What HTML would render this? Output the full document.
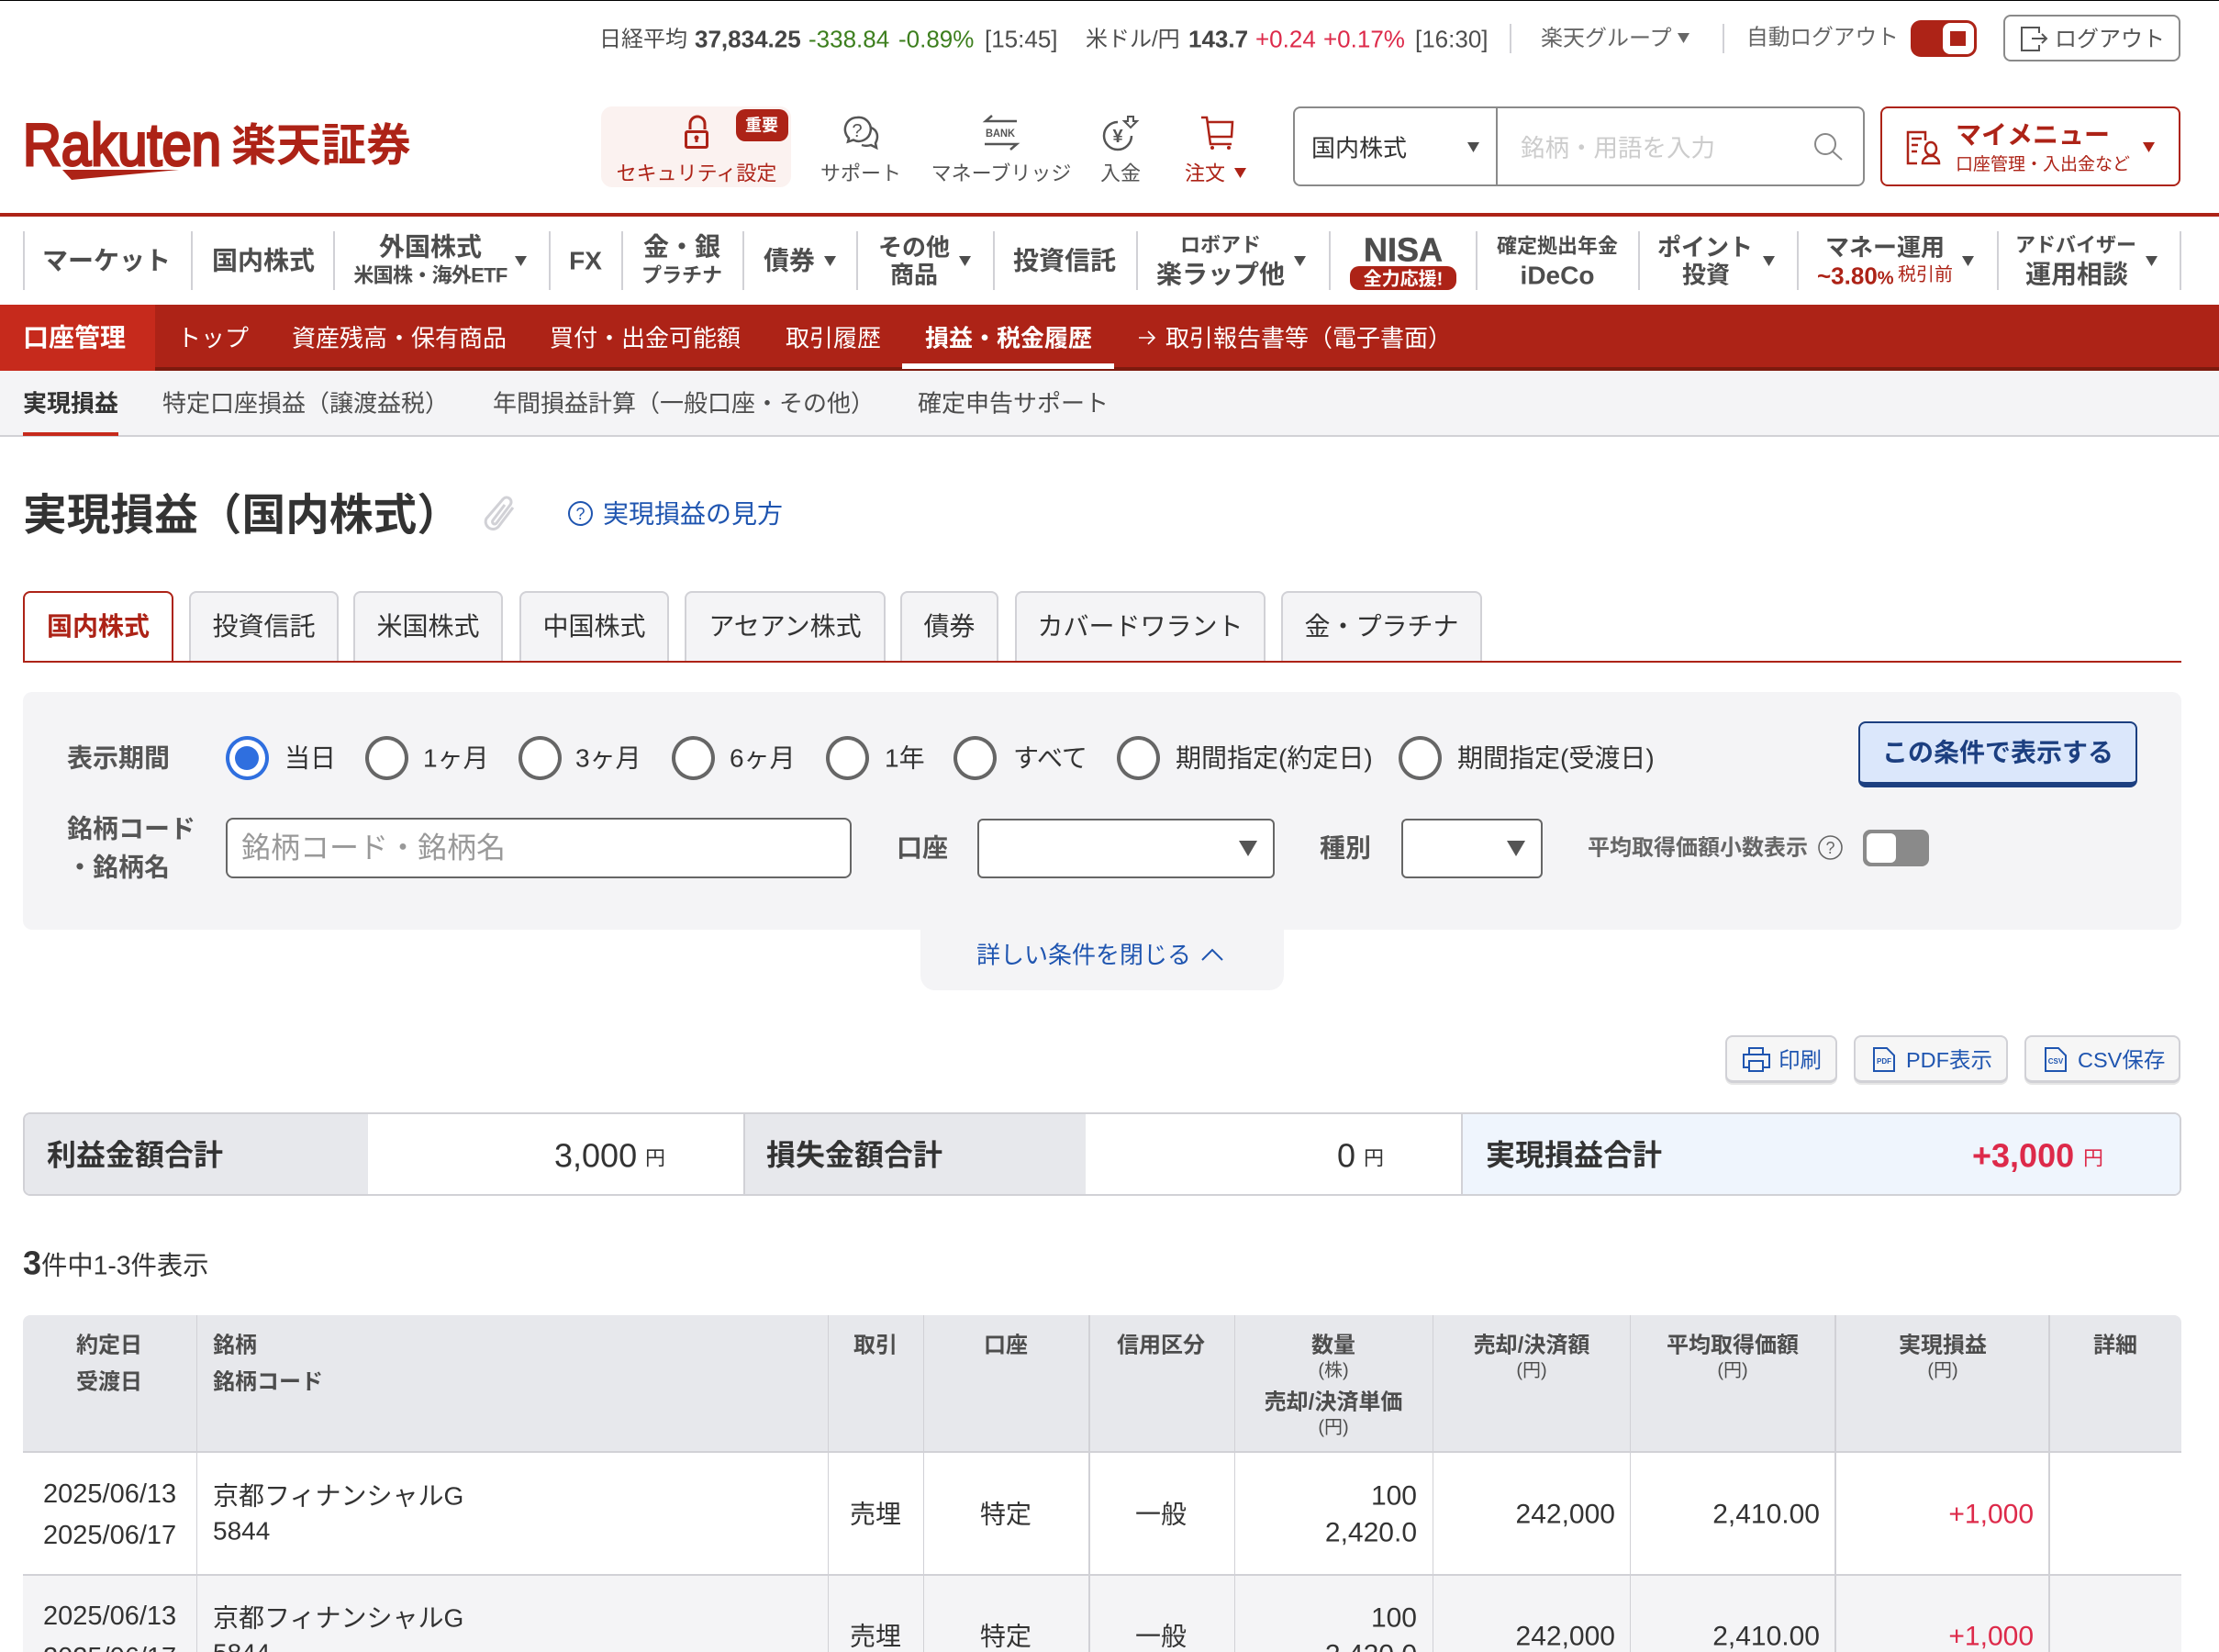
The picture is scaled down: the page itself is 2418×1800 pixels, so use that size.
<!DOCTYPE html>
<html lang="ja"><head><meta charset="utf-8"><title>実現損益（国内株式）</title>
<style>
html,body{margin:0;padding:0;background:#fff}
#p{position:relative;width:2418px;height:1800px;overflow:hidden;background:#fff;font-family:"Liberation Sans","Noto Sans CJK JP",sans-serif;color:#333}
.a{position:absolute;white-space:nowrap;line-height:1;transform:translateY(calc(-50% + 1.5px))}
.c{transform:translate(-50%,calc(-50% + 1.5px))}
.r{transform:translate(-100%,calc(-50% + 1.5px))}
.b{font-weight:700}
.g{color:#4d4d4d}
.w{color:#fff}
.red{color:#ad2317}
.blue{color:#1f55b0}
.box{position:absolute;box-sizing:border-box}
.sep{position:absolute;top:252px;width:2px;height:64px;background:#d1d1d6}
.v{position:absolute;width:13px;height:11px;background:#4d4d4d;clip-path:polygon(0 0,100% 0,50% 100%)}
.tab{position:absolute;top:644px;height:76px;box-sizing:border-box;background:#f4f4f6;border:2px solid #d1d1d6;border-bottom:0;border-radius:8px 8px 0 0;font-size:28px;text-align:center;line-height:74px;white-space:nowrap}
.ra{position:absolute;top:802px;width:47px;height:48px;box-sizing:border-box;border:4px solid #666;border-radius:50%;background:#fff}
.f26{font-size:26px}.f28{font-size:28px}.f24{font-size:24px}.f22{font-size:22px}.f20{font-size:20px}.f30{font-size:30px}
.col{position:absolute;top:1433px;height:367px;background:#d1d1d6;width:1px}
.col2{width:2px}
</style></head><body><div id="p">
<div class="box" style="left:0;top:0;width:2418px;height:1px;background:#000"></div>

<!-- top bar -->
<span class="a f24 g" style="left:653px;top:42px">日経平均</span>
<span class="a b" style="left:757px;top:40.5px;font-size:26px;color:#444">37,834.25</span>
<span class="a" style="left:881px;top:40.5px;font-size:26px;color:#3d7f1e">-338.84</span>
<span class="a" style="left:979px;top:40.5px;font-size:26px;color:#3d7f1e">-0.89%</span>
<span class="a g" style="left:1073px;top:40.5px;font-size:26px">[15:45]</span>
<span class="a f24 g" style="left:1183px;top:42px">米ドル/円</span>
<span class="a b" style="left:1295px;top:40.5px;font-size:26px;color:#444">143.7</span>
<span class="a" style="left:1368px;top:40.5px;font-size:26px;color:#dd2a4a">+0.24</span>
<span class="a" style="left:1442px;top:40.5px;font-size:26px;color:#dd2a4a">+0.17%</span>
<span class="a g" style="left:1542px;top:40.5px;font-size:26px">[16:30]</span>
<div class="box" style="left:1645px;top:26px;width:2px;height:32px;background:#d1d1d6"></div>
<span class="a f24" style="left:1679px;top:41px;color:#666">楽天グループ</span>
<i class="v" style="left:1828px;top:36px;background:#666"></i>
<div class="box" style="left:1877px;top:26px;width:2px;height:32px;background:#d1d1d6"></div>
<span class="a" style="left:1903px;top:41px;color:#666;font-size:23.7px">自動ログアウト</span>
<div class="box" style="left:2082px;top:22px;width:72px;height:40px;border-radius:11px;background:#ad2317"></div>
<div class="box" style="left:2117px;top:25px;width:34px;height:34px;border-radius:8px;background:#fff"></div>
<div class="box" style="left:2125px;top:34px;width:17px;height:16px;background:#ad2317"></div>
<div class="box" style="left:2183px;top:16px;width:193px;height:51px;border:2px solid #8a8a8a;border-radius:8px"></div>
<span class="a f24" style="left:2239px;top:42px;color:#555">ログアウト</span>

<!-- logo -->
<svg style="position:absolute;left:0;top:0" width="500" height="232">
<text x="25" y="180" font-family="Liberation Sans" font-size="65" fill="#ad2317" stroke="#ad2317" stroke-width="3" textLength="216" lengthAdjust="spacingAndGlyphs">Rakuten</text>
<polygon points="68,185 195,185 78,196" fill="#ad2317"/>
</svg>
<span class="a b red" style="left:252px;top:158px;font-size:49px">楽天証券</span>

<!-- utility icons -->
<div class="box" style="left:655px;top:116px;width:207px;height:88px;background:#fbf2f0;border-radius:12px"></div>
<div class="box" style="left:802px;top:119px;width:57px;height:35px;background:#ad2317;border-radius:10px"></div>
<span class="a c b w" style="left:830px;top:135px;font-size:18px">重要</span>
<span class="a c f22 red" style="left:759px;top:188px">セキュリティ設定</span>
<span class="a c f22" style="left:938px;top:188px;color:#555">サポート</span>
<span class="a c f22" style="left:1091px;top:188px;color:#555">マネーブリッジ</span>
<span class="a c f22" style="left:1221px;top:188px;color:#555">入金</span>
<span class="a f22 red" style="left:1291px;top:188px">注文</span>
<i class="v" style="left:1345px;top:183px;background:#ad2317"></i>

<!-- search -->
<div class="box" style="left:1409px;top:116px;width:623px;height:87px;border:2px solid #8a8a8a;border-radius:8px"></div>
<div class="box" style="left:1630px;top:116px;width:2px;height:87px;background:#8a8a8a"></div>
<span class="a f26" style="left:1429px;top:160px">国内株式</span>
<i class="v" style="left:1599px;top:155px"></i>
<span class="a" style="left:1657px;top:160px;color:#ccc;font-size:26.5px">銘柄・用語を入力</span>
<div class="box" style="left:2049px;top:116px;width:327px;height:87px;border:2px solid #ad2317;border-radius:8px"></div>
<span class="a b red f28" style="left:2131px;top:146px">マイメニュー</span>
<span class="a red" style="left:2131px;top:178px;font-size:19px">口座管理・入出金など</span>
<i class="v" style="left:2335px;top:155px;background:#ad2317"></i>

<!-- main nav -->
<div class="box" style="left:0;top:232px;width:2418px;height:4px;background:#ad2317"></div>
<i class="sep" style="left:25px"></i><i class="sep" style="left:208px"></i><i class="sep" style="left:363px"></i><i class="sep" style="left:598px"></i><i class="sep" style="left:677px"></i><i class="sep" style="left:809px"></i><i class="sep" style="left:933px"></i><i class="sep" style="left:1082px"></i><i class="sep" style="left:1238px"></i><i class="sep" style="left:1448px"></i><i class="sep" style="left:1608px"></i><i class="sep" style="left:1785px"></i><i class="sep" style="left:1958px"></i><i class="sep" style="left:2176px"></i><i class="sep" style="left:2375px"></i>
<span class="a c b g f28" style="left:116px;top:283px">マーケット</span>
<span class="a c b g f28" style="left:287px;top:283px">国内株式</span>
<span class="a c b g f28" style="left:469px;top:268px">外国株式</span>
<span class="a c b g f22" style="left:469px;top:299px;letter-spacing:-.7px">米国株・海外ETF</span>
<i class="v" style="left:561px;top:279px"></i>
<span class="a c b g f28" style="left:638px;top:283px">FX</span>
<span class="a c b g f28" style="left:743px;top:268px">金・銀</span>
<span class="a c b g f22" style="left:743px;top:299px">プラチナ</span>
<span class="a c b g f28" style="left:860px;top:283px">債券</span>
<i class="v" style="left:898px;top:279px"></i>
<span class="a c b g f26" style="left:996px;top:268px">その他</span>
<span class="a c b g f26" style="left:996px;top:298px">商品</span>
<i class="v" style="left:1045px;top:279px"></i>
<span class="a c b g f28" style="left:1160px;top:283px">投資信託</span>
<span class="a c b g f22" style="left:1330px;top:266px">ロボアド</span>
<span class="a c b g f28" style="left:1330px;top:298px">楽ラップ他</span>
<i class="v" style="left:1410px;top:279px"></i>
<span class="a c b g" style="left:1529px;top:270.5px;font-size:36px;-webkit-text-stroke:.5px #4d4d4d">NISA</span>
<div class="box" style="left:1471px;top:290px;width:116px;height:26px;border-radius:10px;background:#ad2317"></div>
<span class="a c b w f20" style="left:1529px;top:303px">全力応援!</span>
<span class="a c b g f22" style="left:1697px;top:267px">確定拠出年金</span>
<span class="a c b g f28" style="left:1697px;top:299px">iDeCo</span>
<span class="a c b g f26" style="left:1858px;top:268px">ポイント</span>
<span class="a c b g f26" style="left:1859px;top:298px">投資</span>
<i class="v" style="left:1921px;top:279px"></i>
<span class="a c b g f26" style="left:2054px;top:268px">マネー運用</span>
<span class="a b red" style="left:1980px;top:298.5px;font-size:26px">~3.80<span style="font-size:20px">%</span></span>
<span class="a f20 red" style="left:2068px;top:298px">税引前</span>
<i class="v" style="left:2138px;top:279px"></i>
<span class="a c b g f22" style="left:2262px;top:266px">アドバイザー</span>
<span class="a c b g f28" style="left:2263px;top:298px">運用相談</span>
<i class="v" style="left:2338px;top:279px"></i>

<!-- red nav -->
<div class="box" style="left:0;top:332px;width:2418px;height:72px;background:#ad2317;border-bottom:4px solid #7d1a0e"></div>
<div class="box" style="left:0;top:332px;width:169px;height:72px;background:#c62a1c"></div>
<span class="a b w f28" style="left:25px;top:367px">口座管理</span>
<span class="a f26 w" style="left:193px;top:367px">トップ</span>
<span class="a f26 w" style="left:318px;top:367px">資産残高・保有商品</span>
<span class="a f26 w" style="left:599px;top:367px">買付・出金可能額</span>
<span class="a f26 w" style="left:856px;top:367px">取引履歴</span>
<span class="a b f26 w" style="left:1008px;top:367px">損益・税金履歴</span>
<div class="box" style="left:983px;top:396px;width:231px;height:6px;background:#fff"></div>
<span class="a f26 w" style="left:1270px;top:367px">取引報告書等（電子書面）</span>

<!-- sub nav -->
<div class="box" style="left:0;top:404px;width:2418px;height:72px;background:#f4f4f6;border-bottom:2px solid #d1d1d6"></div>
<div class="box" style="left:25px;top:471px;width:104px;height:4px;background:#c62a1c"></div>
<span class="a b f26" style="left:25px;top:438px">実現損益</span>
<span class="a f26 g" style="left:177px;top:438px">特定口座損益（譲渡益税）</span>
<span class="a f26 g" style="left:537px;top:438px">年間損益計算（一般口座・その他）</span>
<span class="a f26 g" style="left:1000px;top:438px">確定申告サポート</span>

<!-- title -->
<span class="a b" style="left:25px;top:560.5px;font-size:47.7px">実現損益（国内株式）</span>
<span class="a f28 blue" style="left:657px;top:559px">実現損益の見方</span>

<!-- tabs -->
<div class="tab b red" style="left:25px;width:164px;border-color:#ad2317;background:#fff">国内株式</div>
<div class="tab" style="left:206px;width:163px">投資信託</div>
<div class="tab" style="left:385px;width:163px">米国株式</div>
<div class="tab" style="left:566px;width:163px">中国株式</div>
<div class="tab" style="left:746px;width:219px">アセアン株式</div>
<div class="tab" style="left:981px;width:107px">債券</div>
<div class="tab" style="left:1106px;width:273px">カバードワラント</div>
<div class="tab" style="left:1396px;width:219px">金・プラチナ</div>
<div class="box" style="left:25px;top:720px;width:2352px;height:2px;background:#ad2317"></div>

<!-- search panel -->
<div class="box" style="left:25px;top:754px;width:2352px;height:259px;background:#f4f4f6;border-radius:10px"></div>
<div class="box" style="left:1003px;top:1013px;width:396px;height:66px;background:#f4f4f6;border-radius:0 0 16px 16px"></div>
<span class="a b f28" style="left:73px;top:825px;color:#555">表示期間</span>
<i class="ra" style="left:246px;border-color:#2f6fdf"></i>
<div class="box" style="left:256px;top:813px;width:26px;height:26px;border-radius:50%;background:#2f6fdf"></div>
<span class="a f28" style="left:310px;top:825px">当日</span>
<i class="ra" style="left:398px"></i><span class="a f28" style="left:461px;top:825px">1ヶ月</span>
<i class="ra" style="left:565px"></i><span class="a f28" style="left:627px;top:825px">3ヶ月</span>
<i class="ra" style="left:732px"></i><span class="a f28" style="left:795px;top:825px">6ヶ月</span>
<i class="ra" style="left:900px"></i><span class="a f28" style="left:964px;top:825px">1年</span>
<i class="ra" style="left:1039px"></i><span class="a f28" style="left:1104px;top:825px">すべて</span>
<i class="ra" style="left:1217px"></i><span class="a f28" style="left:1281px;top:825px">期間指定(約定日)</span>
<i class="ra" style="left:1524px"></i><span class="a f28" style="left:1588px;top:825px">期間指定(受渡日)</span>
<div class="box" style="left:2025px;top:786px;width:304px;height:72px;background:#dbe7fb;border:2px solid #1c3f80;border-bottom-width:6px;border-radius:8px"></div>
<span class="a c b f28" style="left:2177px;top:818.5px;color:#1c3f80">この条件で表示する</span>

<span class="a b f28" style="left:73px;top:902px;color:#555">銘柄コード</span>
<span class="a b f28" style="left:73px;top:944px;color:#555">・銘柄名</span>
<div class="box" style="left:246px;top:891px;width:682px;height:66px;background:#fff;border:2px solid #666;border-radius:8px"></div>
<span class="a" style="left:263px;top:921.5px;font-size:32px;color:#999">銘柄コード・銘柄名</span>
<span class="a b f28" style="left:977px;top:923px;color:#555">口座</span>
<div class="box" style="left:1065px;top:892px;width:324px;height:65px;background:#fff;border:2px solid #666;border-radius:6px"></div>
<i class="v" style="left:1350px;top:916px;width:20px;height:17px;background:#555"></i>
<span class="a b f28" style="left:1438px;top:923px;color:#555">種別</span>
<div class="box" style="left:1527px;top:892px;width:154px;height:65px;background:#fff;border:2px solid #666;border-radius:6px"></div>
<i class="v" style="left:1642px;top:916px;width:20px;height:17px;background:#555"></i>
<span class="a b f24" style="left:1730px;top:923px;color:#666">平均取得価額小数表示</span>
<div class="box" style="left:2030px;top:904px;width:72px;height:40px;border-radius:8px;background:#8a8a8a"></div>
<div class="box" style="left:2034px;top:908px;width:32px;height:32px;border-radius:6px;background:#fff"></div>
<span class="a f26 blue" style="left:1064px;top:1038.5px">詳しい条件を閉じる</span>

<!-- action buttons -->
<div class="box" style="left:1880px;top:1128px;width:122px;height:52px;background:#f6f6f6;border:2px solid #d1d1d6;border-bottom-width:3px;border-radius:8px;box-shadow:0 2px 0 #e6e6e6"></div>
<div class="box" style="left:2020px;top:1128px;width:168px;height:52px;background:#f6f6f6;border:2px solid #d1d1d6;border-bottom-width:3px;border-radius:8px;box-shadow:0 2px 0 #e6e6e6"></div>
<div class="box" style="left:2206px;top:1128px;width:170px;height:52px;background:#f6f6f6;border:2px solid #d1d1d6;border-bottom-width:3px;border-radius:8px;box-shadow:0 2px 0 #e6e6e6"></div>
<span class="a blue" style="left:1938px;top:1154px;font-size:23.5px">印刷</span>
<span class="a blue" style="left:2077px;top:1154px;font-size:23.5px">PDF表示</span>
<span class="a blue" style="left:2264px;top:1154px;font-size:23.5px">CSV保存</span>

<!-- summary -->
<div class="box" style="left:25px;top:1212px;width:2352px;height:91px;border:2px solid #d1d1d6;border-radius:8px;background:#fff;overflow:hidden">
<div class="box" style="left:0;top:0;width:374px;height:87px;background:#e7e8ec"></div>
<div class="box" style="left:783px;top:0;width:2px;height:87px;background:#d1d1d6"></div>
<div class="box" style="left:785px;top:0;width:371px;height:87px;background:#e7e8ec"></div>
<div class="box" style="left:1565px;top:0;width:2px;height:87px;background:#d1d1d6"></div>
<div class="box" style="left:1567px;top:0;width:785px;height:87px;background:#eff5fd"></div>
</div>
<span class="a b" style="left:51px;top:1256.5px;font-size:32px">利益金額合計</span>
<span class="a" style="left:604px;top:1257.5px;font-size:36px">3,000</span>
<span class="a f22" style="left:703px;top:1260.5px">円</span>
<span class="a b" style="left:835px;top:1256.5px;font-size:32px">損失金額合計</span>
<span class="a" style="left:1457px;top:1257.5px;font-size:36px">0</span>
<span class="a f22" style="left:1486px;top:1260.5px">円</span>
<span class="a b" style="left:1619px;top:1256.5px;font-size:32px">実現損益合計</span>
<span class="a b" style="left:2149px;top:1257.5px;font-size:36px;color:#dd2a4a">+3,000</span>
<span class="a f22" style="left:2270px;top:1260.5px;color:#dd2a4a">円</span>

<span class="a" style="left:25px;top:1375px;font-size:28.3px"><b style="font-size:36px">3</b>件中1-3件表示</span>

<!-- table -->
<div class="box" style="left:25px;top:1433px;width:2352px;height:148px;background:#e7e8ec;border-radius:8px 8px 0 0"></div>
<div class="box" style="left:25px;top:1581px;width:2352px;height:2px;background:#d1d1d6"></div>
<div class="box" style="left:25px;top:1715px;width:2352px;height:2px;background:#d1d1d6"></div>
<div class="box" style="left:25px;top:1717px;width:2352px;height:83px;background:#f4f4f6"></div>
<i class="col" style="left:214px"></i><i class="col" style="left:902px"></i><i class="col" style="left:1006px"></i><i class="col col2" style="left:1186px"></i><i class="col" style="left:1345px"></i><i class="col" style="left:1561px"></i><i class="col" style="left:1776px"></i><i class="col col2" style="left:1999px"></i><i class="col col2" style="left:2232px"></i>

<span class="a c b f24 g" style="left:119px;top:1465px">約定日</span>
<span class="a c b f24 g" style="left:119px;top:1505px">受渡日</span>
<span class="a b f24 g" style="left:232px;top:1465px">銘柄</span>
<span class="a b f24 g" style="left:232px;top:1505px">銘柄コード</span>
<span class="a c b f24 g" style="left:954px;top:1465px">取引</span>
<span class="a c b f24 g" style="left:1096px;top:1465px">口座</span>
<span class="a c b f24 g" style="left:1265px;top:1465px">信用区分</span>
<span class="a c b f24 g" style="left:1453px;top:1465px">数量</span>
<span class="a c f20 g" style="left:1453px;top:1491.5px">(株)</span>
<span class="a c b f24 g" style="left:1453px;top:1527px">売却/決済単価</span>
<span class="a c f20 g" style="left:1453px;top:1553.5px">(円)</span>
<span class="a c b f24 g" style="left:1669px;top:1465px">売却/決済額</span>
<span class="a c f20 g" style="left:1669px;top:1491.5px">(円)</span>
<span class="a c b f24 g" style="left:1888px;top:1465px">平均取得価額</span>
<span class="a c f20 g" style="left:1888px;top:1491.5px">(円)</span>
<span class="a c b f24 g" style="left:2117px;top:1465px">実現損益</span>
<span class="a c f20 g" style="left:2117px;top:1491.5px">(円)</span>
<span class="a c b f24 g" style="left:2305px;top:1465px">詳細</span>

<span class="a" style="left:47px;top:1627px;font-size:29px">2025/06/13</span>
<span class="a" style="left:47px;top:1672px;font-size:29px">2025/06/17</span>
<span class="a f28" style="left:232px;top:1629px">京都フィナンシャルG</span>
<span class="a" style="left:232px;top:1667px;font-size:28px">5844</span>
<span class="a c f28" style="left:954px;top:1649px">売埋</span>
<span class="a c f28" style="left:1096px;top:1649px">特定</span>
<span class="a c f28" style="left:1265px;top:1649px">一般</span>
<span class="a r f30" style="left:1544px;top:1629px">100</span>
<span class="a r f30" style="left:1544px;top:1669px">2,420.0</span>
<span class="a r f30" style="left:1760px;top:1649px">242,000</span>
<span class="a r f30" style="left:1983px;top:1649px">2,410.00</span>
<span class="a r f30" style="left:2216px;top:1649px;color:#dd2a4a">+1,000</span>

<span class="a" style="left:47px;top:1760px;font-size:29px">2025/06/13</span>
<span class="a" style="left:47px;top:1805px;font-size:29px">2025/06/17</span>
<span class="a f28" style="left:232px;top:1762px">京都フィナンシャルG</span>
<span class="a" style="left:232px;top:1800px;font-size:28px">5844</span>
<span class="a c f28" style="left:954px;top:1782px">売埋</span>
<span class="a c f28" style="left:1096px;top:1782px">特定</span>
<span class="a c f28" style="left:1265px;top:1782px">一般</span>
<span class="a r f30" style="left:1544px;top:1762px">100</span>
<span class="a r f30" style="left:1544px;top:1802px">2,420.0</span>
<span class="a r f30" style="left:1760px;top:1782px">242,000</span>
<span class="a r f30" style="left:1983px;top:1782px">2,410.00</span>
<span class="a r f30" style="left:2216px;top:1782px;color:#dd2a4a">+1,000</span>

<!-- icon overlay -->
<svg style="position:absolute;left:0;top:0" width="2418" height="1800" fill="none">
<!-- red nav arrow -->
<path d="M1241 368h17M1251 361l7 7-7 7" stroke="#fff" stroke-width="1.6"/>
<!-- lock -->
<g stroke="#ad2317" stroke-width="3"><path d="M752 141v-6a8 8 0 0 1 16 0v6"/><rect x="747.5" y="143.5" width="23" height="17" rx="1.5"/><path d="M759 150v5"/></g>
<circle cx="759" cy="150" r="2.5" fill="#ad2317"/>
<!-- support -->
<g stroke="#555" stroke-width="2.5"><path d="M934 128a13 13 0 0 0-9 22.5l-1 4 6-2a13 13 0 1 0 4-24.5z"/><path d="M949 139c5 2 7 6 7 10 0 3-1 5-2 7l1 5-6-3c-3 1-7 1-10 0"/></g>
<text x="934" y="149" font-family="Liberation Sans" font-size="20" fill="#555" text-anchor="middle">?</text>
<!-- bank -->
<g stroke="#555" stroke-width="2.5"><path d="M1108 132H1074l7-6"/><path d="M1073 157h35l-7 6"/></g>
<text x="1074" y="149" font-family="Liberation Sans" font-weight="700" font-size="12" fill="#555" textLength="32" lengthAdjust="spacingAndGlyphs">BANK</text>
<!-- nyukin -->
<path d="M1233 148a15 15 0 1 1-15-15" stroke="#555" stroke-width="2.5"/>
<path d="M1229 127h6v5h4l-7 7-7-7h4z" stroke="#555" stroke-width="2"/>
<text x="1218" y="155" font-family="Liberation Sans" font-weight="700" font-size="20" fill="#555" text-anchor="middle">¥</text>
<!-- cart -->
<g stroke="#ad2317" stroke-width="2.5"><path d="M1309 128h6l4 29h23"/><path d="M1316 133h27l-1 16h-23"/></g>
<circle cx="1321" cy="161" r="2" fill="#ad2317"/><circle cx="1339" cy="161" r="2" fill="#ad2317"/>
<!-- search -->
<circle cx="1989" cy="157" r="11" stroke="#888" stroke-width="2"/><path d="M1997 165l10 9" stroke="#888" stroke-width="2"/>
<!-- mymenu -->
<g stroke="#ad2317" stroke-width="2.5"><path d="M2098 153v-9h-19v34h10"/><path d="M2083 151h11M2083 158h7M2083 165h6"/><ellipse cx="2104" cy="162" rx="6" ry="7"/><path d="M2095 178c0-5 3-6 6-8h6c3 2 6 3 6 8z"/></g>
<!-- logout -->
<g stroke="#555" stroke-width="2"><path d="M2222 36v-6h-19v25h19v-6"/><path d="M2214 42h16M2225 37l5 5-5 5"/></g>
<!-- clip -->
<path d="M559 553l-16 21a8 8 0 0 1-13-9l18-21a5 5 0 0 1 8 6l-15 20a2 2 0 0 1-4-3l13-17" stroke="#d1d1d6" stroke-width="3"/>
<!-- help -->
<circle cx="632.5" cy="559.5" r="12.5" stroke="#1f55b0" stroke-width="2"/>
<text x="632.5" y="566" font-family="Liberation Sans" font-size="18" fill="#1f55b0" text-anchor="middle">?</text>
<circle cx="1994.5" cy="923.5" r="12.5" stroke="#666" stroke-width="1.6"/>
<text x="1994.5" y="930" font-family="Liberation Sans" font-size="18" fill="#666" text-anchor="middle">?</text>
<!-- chevron -->
<path d="M1310 1046l11-11 11 11" stroke="#1f55b0" stroke-width="2"/>
<!-- printer -->
<g stroke="#1f55b0" stroke-width="2"><path d="M1906 1149v-7h15v7"/><path d="M1906 1163h-6v-14h28v14h-6"/><rect x="1906" y="1156" width="15" height="11"/></g>
<!-- pdf / csv -->
<path d="M2042 1142h14l8 8v17h-22z" stroke="#1f55b0" stroke-width="2"/>
<text x="2053" y="1159" font-family="Liberation Sans" font-weight="700" font-size="8" fill="#1f55b0" text-anchor="middle">PDF</text>
<path d="M2229 1142h14l8 8v17h-22z" stroke="#1f55b0" stroke-width="2"/>
<text x="2240" y="1159" font-family="Liberation Sans" font-weight="700" font-size="8" fill="#1f55b0" text-anchor="middle">CSV</text>
</svg>
</div></body></html>
